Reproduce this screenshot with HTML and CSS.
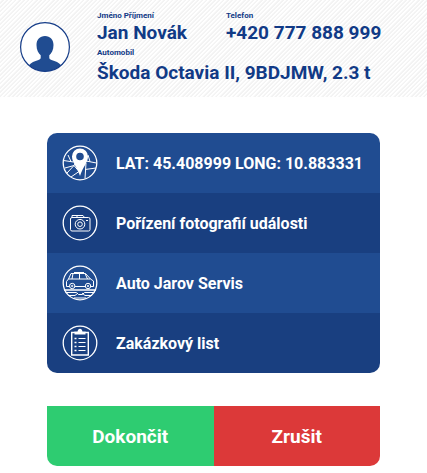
FILE: index.html
```html
<!DOCTYPE html>
<html lang="cs">
<head>
<meta charset="utf-8">
<meta name="viewport" content="width=device-width, initial-scale=1">
<title>Jan Novák</title>
<link rel="stylesheet" href="styles.css">
</head>
<body>
<header class="profile">
  <svg class="avatar" viewBox="0 0 50 50" aria-hidden="true">
    <circle cx="25" cy="25" r="24.4" fill="#fff"/>
    <path fill="#204c91" d="M25 14c5.200 0 8.500 3.500 8.500 9 0 5-1.900 8.500-4.200 10.200v2.600c0 1.200 1 1.800 2.200 2.200 4 1.300 7.500 2.500 9.500 5.300A24.500 24.500 0 0 1 25 49.500 24.500 24.500 0 0 1 9 43.300c2-2.800 5.500-4 9.500-5.300 1.200-.4 2.200-1 2.200-2.200v-2.600c-2.300-1.700-4.200-5.200-4.200-10.200 0-5.500 3.300-9 8.500-9z"/>
    <circle cx="25" cy="25" r="24.400" fill="none" stroke="#153c88" stroke-width="1.200"/>
  </svg>
  <dl class="details">
    <div class="field">
      <dt>Jméno Příjmení</dt>
      <dd>Jan Novák</dd>
    </div>
    <div class="field">
      <dt>Telefon</dt>
      <dd>+420 777 888 999</dd>
    </div>
    <div class="field field-wide">
      <dt>Automobil</dt>
      <dd>Škoda Octavia II, 9BDJMW, 2.3 t</dd>
    </div>
  </dl>
</header>
<main class="content">
  <nav class="menu">
    <a class="item" href="#poloha">
      <svg class="icon" viewBox="0 0 36 36" aria-hidden="true">
        <g fill="none" stroke="#fff">
          <circle cx="18" cy="18" r="16.800" stroke-width="1.300"/>
          <path d="M1.500 15.500l10 1.500M24 16l10.500 2M6 10l3 6.500M3 23l9-2.500 2.500-4M12 20.500l5 6-8 5.500M5 28l7-7.500M24 18l-1 15.500M23 24.500l11-1.500M26 10l2 6.500"/>
        </g>
        <path fill="#fff" fill-rule="evenodd" d="M18 3.500a8 8 0 0 1 8 8c0 6-5 10-8 19.500-3-9.500-8-13.500-8-19.500a8 8 0 0 1 8-8zm0 4.200a3.800 3.800 0 1 0 0 7.600 3.800 3.800 0 0 0 0-7.600z"/>
      </svg>
      <span>LAT: 45.408999 LONG: 10.883331</span>
    </a>
    <a class="item" href="#fotografie">
      <svg class="icon" viewBox="0 0 36 36" aria-hidden="true">
        <g fill="none" stroke="#fff">
          <circle cx="18" cy="18" r="16.800" stroke-width="1.300"/>
          <rect x="8.500" y="12.500" width="19.500" height="13.500" rx="1.500"/>
          <path d="M10 12.500v-2h5v2M15 10.500h6l1.500 2"/>
          <circle cx="18" cy="19.200" r="4.800"/>
          <circle cx="18" cy="19.200" r="2.300"/>
          <path d="M24 15.500h2"/>
        </g>
      </svg>
      <span>Pořízení fotografií události</span>
    </a>
    <a class="item" href="#servis">
      <svg class="icon" viewBox="0 0 36 36" aria-hidden="true">
        <g fill="none" stroke="#fff">
          <circle cx="18" cy="18" r="16.800" stroke-width="1.300"/>
          <path d="M7.500 21.500H4.500v-5l2-2.500 2.500-5.500h14.500l5 5.500 3 2v5.500h-3M13 21.500h10.500M6.500 14h22M11 8.500l-1 5.500M17.500 8.500v5.500M23 8.500l2.500 5.500M12 7.500h10"/>
          <circle cx="10.200" cy="21" r="2.700"/>
          <circle cx="26" cy="21" r="2.700"/>
          <circle cx="10.200" cy="21" r=".7"/>
          <circle cx="26" cy="21" r=".7"/>
          <path stroke-width="1.400" d="M2 25h32"/>
          <path d="M3.500 27.500h11l2 2h4l2-2h10M6 30.500h7l3-2.500M30 30.500h-7l-3-2.500M12 33h12"/>
        </g>
      </svg>
      <span>Auto Jarov Servis</span>
    </a>
    <a class="item" href="#zakazka">
      <svg class="icon" viewBox="0 0 36 36" aria-hidden="true">
        <circle cx="18" cy="18" r="16.800" fill="none" stroke="#fff" stroke-width="1.300"/>
        <path fill="none" stroke="#fff" stroke-width="1.400" d="M13 7.500H9.700v22.500h16.600V7.500H23"/>
        <path fill="#fff" d="M12.500 9.500V6.500h3c.3-1.500 1.200-2.700 2.500-2.700s2.200 1.200 2.500 2.700h3v3z"/>
        <path stroke="#fff" stroke-width="1.400" d="M12.500 13.500h2M12.500 17.500h2M12.500 21.500h2M12.500 25.500h2"/>
        <path stroke="#fff" d="M16.500 13.500h7M16.500 17.500h7M16.500 21.500h7M16.500 25.500h7"/>
      </svg>
      <span>Zakázkový list</span>
    </a>
  </nav>
  <div class="actions">
    <button class="action action-finish" type="button">Dokončit</button>
    <button class="action action-cancel" type="button">Zrušit</button>
  </div>
</main>
</body>
</html>
```
FILE: styles.css
```css
* {
  box-sizing: border-box;
}

body {
  margin: 0;
  background: #fff;
  font-family: Roboto, "Liberation Sans", sans-serif;
  font-weight: 700;
}

.profile {
  display: flex;
  align-items: center;
  gap: 27px;
  padding: 10px 20px 13px;
  color: #113a86;
  background: repeating-linear-gradient(135deg, #fff 0 1px, #f3f3f3 2px 3px);
}

.avatar {
  flex: none;
  width: 50px;
  height: 50px;
}

.details {
  display: flex;
  flex-wrap: wrap;
  gap: 3px 39px;
  margin: 0;
}

.field-wide {
  flex-basis: 100%;
}

.field dt {
  font-size: 8px;
  line-height: 12px;
}

.field dd {
  margin: 0;
  font-size: 19px;
  line-height: 22px;
}

.field-wide dd {
  padding-top: 3px;
}

.content {
  display: grid;
  gap: 33px;
  padding: 36px 47px 7px;
}

.menu {
  overflow: hidden;
  border-radius: 10px;
}

.item {
  display: flex;
  align-items: center;
  gap: 18px;
  height: 60px;
  padding: 0 15px;
  background: #204c91;
  color: #fff;
  font-size: 16px;
  text-decoration: none;
  white-space: nowrap;
}

.item:nth-child(even) {
  background: #193f80;
}

.icon {
  flex: none;
  width: 36px;
  height: 36px;
}

.actions {
  display: flex;
  overflow: hidden;
  border-radius: 0 0 10px 10px;
}

.action {
  flex: 1;
  height: 60px;
  border: 0;
  color: #fff;
  font: inherit;
  font-size: 19px;
}

.action-finish {
  background: #2ecc71;
}

.action-cancel {
  background: #dc3939;
}
```
